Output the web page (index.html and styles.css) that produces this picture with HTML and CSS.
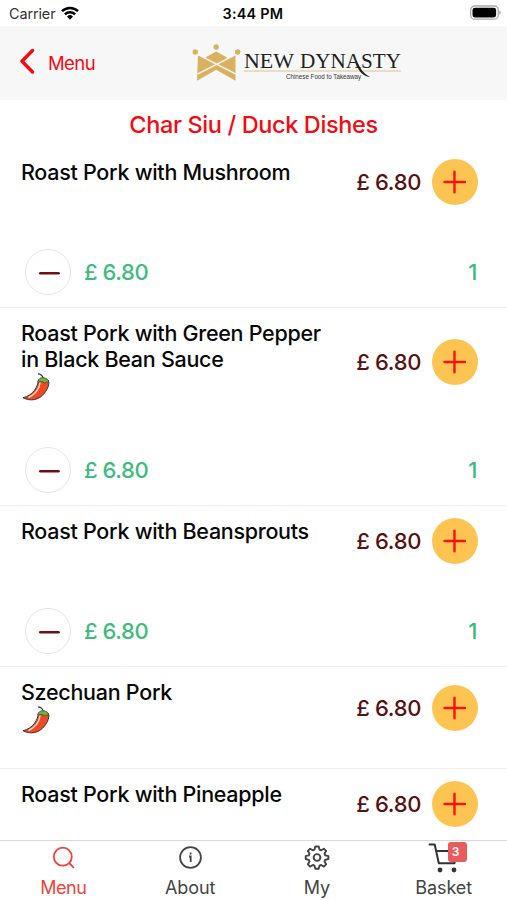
FILE: index.html
```html
<!DOCTYPE html>
<html lang="en">
<head>
<meta charset="utf-8">
<title>New Dynasty</title>
<link rel="stylesheet" href="styles.css">
</head>
<body>
<svg class="defs" width="0" height="0" aria-hidden="true">
  <symbol id="plus" viewBox="0 0 46 46"><path d="M22.500 12.800v20.400M12.500 23h20.400" fill="none" stroke="#f5130c" stroke-width="2.4" stroke-linecap="round"/></symbol>
  <symbol id="minus" viewBox="0 0 46 46"><path d="M15 24.3h19" fill="none" stroke="#701010" stroke-width="2.8" stroke-linecap="round"/></symbol>
  <symbol id="chili" viewBox="0 0 28 28">
    <path d="M16.500 .8C19.500 1.300 20.800 3 21.200 5.500" fill="none" stroke="#333b38" stroke-width="1.300" stroke-linecap="round"/>
    <path d="M16.500 7C16 13 11.500 22.500 1 24.700C8 28.500 17 27.500 22.500 20C26 15.500 27.500 11.500 26.500 7.500Z" fill="#ef4a25" stroke="#3b3432" stroke-width="1"/>
    <path d="M18 10C17 16 13 21.500 7 24.300" fill="none" stroke="#ffd9cb" stroke-width="1.500" stroke-linecap="round"/>
    <path d="M15.800 9.300C16.300 6 18.500 4.300 21.200 4.800C24.500 5 26.500 6.500 26.800 9.800C25 8.700 24 9 22.600 10C21 8.500 18 8 15.800 9.300Z" fill="#72b83e" stroke="#3c5130" stroke-width=".9"/>
  </symbol>
</svg>
<div class="screen">
  <div class="status">
    <span class="carrier">Carrier</span>
    <svg class="wifi" width="18" height="14" viewBox="0 0 18 14"><g fill="none" stroke="#000" stroke-width="2.500"><path d="M1 5.200a11.500 11.500 0 0 1 16 0M3.900 8.300a7.200 7.200 0 0 1 10.200 0"/></g><path d="M9 13.700l-3-3.200a4.400 4.400 0 0 1 6 0z"/></svg>
    <span class="time">3:44 PM</span>
    <svg class="battery" width="32" height="16" viewBox="0 0 32 16"><rect x="-.3" y="1" width="27.600" height="13.200" rx="4" fill="#fff" stroke="#aaa" stroke-width="1.300"/><rect x="1.500" y="2.800" width="23.600" height="9.600" rx="2.400"/><path d="M28.300 5.200q3 2.300 0 4.600z" fill="#aaa"/></svg>
  </div>
  <header class="header">
    <svg class="back" width="16" height="26" viewBox="0 0 16 26"><path d="M13.500 2.500L3 13.300L13.500 24" fill="none" stroke="#f40a12" stroke-width="3.400" stroke-linecap="round" stroke-linejoin="round"/></svg>
    <span class="back-label">Menu</span>
    <svg class="logo" width="224" height="42" viewBox="0 0 224 42">
      <path d="M7 14L16.500 18.800L14.500 16.500L25.200 10.500L36 16.500L34.500 18.800L44.500 14V39.800L25.200 28.800L6 39.800z" fill="#d9b15f"/>
      <path d="M6.500 13.300L45 33.200M45 13.300L6.500 33.200" stroke="#f7f7f7" stroke-width="1.500"/>
      <g fill="#d9b15f"><circle cx="4.300" cy="11" r="2.700"/><circle cx="25.200" cy="6" r="2.700"/><circle cx="46.700" cy="11" r="2.700"/></g>
      <path d="M53 30H210" stroke="#e3c18f" stroke-width="1.200"/>
      <text class="brand" x="53" y="26.500" textLength="50" lengthAdjust="spacingAndGlyphs">NEW</text>
      <text class="brand" x="109" y="26.500" textLength="101" lengthAdjust="spacingAndGlyphs">DYNASTY</text>
      <path d="M165.500 20C168.500 25 171 32 179 36C173.500 35.500 169 32 166.500 26z" fill="#222"/>
      <text class="tagline" x="95" y="37.800" textLength="75" lengthAdjust="spacingAndGlyphs">Chinese Food to Takeaway</text>
    </svg>
  </header>
  <main class="list">
    <h1 class="title">Char Siu / Duck Dishes</h1>
    <section class="item">
      <div class="top"><div class="name">Roast Pork with Mushroom</div><span class="price">£ 6.80</span><svg class="btn add"><use href="#plus"/></svg></div>
      <div class="qty"><svg class="btn remove"><use href="#minus"/></svg><span class="sum">£ 6.80</span><span class="count">1</span></div>
    </section>
    <section class="item tall">
      <div class="top"><div class="name">Roast Pork with Green Pepper<br>in Black Bean Sauce<svg class="chili"><use href="#chili"/></svg></div><span class="price">£ 6.80</span><svg class="btn add"><use href="#plus"/></svg></div>
      <div class="qty"><svg class="btn remove"><use href="#minus"/></svg><span class="sum">£ 6.80</span><span class="count">1</span></div>
    </section>
    <section class="item">
      <div class="top"><div class="name">Roast Pork with Beansprouts</div><span class="price">£ 6.80</span><svg class="btn add"><use href="#plus"/></svg></div>
      <div class="qty"><svg class="btn remove"><use href="#minus"/></svg><span class="sum">£ 6.80</span><span class="count">1</span></div>
    </section>
    <section class="item short">
      <div class="top"><div class="name">Szechuan Pork<svg class="chili"><use href="#chili"/></svg></div><span class="price">£ 6.80</span><svg class="btn add"><use href="#plus"/></svg></div>
    </section>
    <section class="item last">
      <div class="top"><div class="name">Roast Pork with Pineapple</div><span class="price">£ 6.80</span><svg class="btn add"><use href="#plus"/></svg></div>
    </section>
  </main>
  <nav class="tabs">
    <div class="tab active"><svg width="32" height="32" viewBox="0 0 32 32" fill="none" stroke="currentColor" stroke-width="1.800" stroke-linecap="round"><circle cx="15.800" cy="14.700" r="9"/><path d="M22.300 21.200L26.400 25.300"/></svg><span>Menu</span></div>
    <div class="tab"><svg width="32" height="32" viewBox="0 0 32 32" fill="none" stroke="currentColor" stroke-width="1.800"><circle cx="16.500" cy="15.500" r="10.400"/><path d="M15 14.500h1.700v5.500M16.600 10.500v2" stroke-width="1.800"/></svg><span>About</span></div>
    <div class="tab"><svg width="32" height="32" viewBox="0 0 32 32" fill="none" stroke="currentColor" stroke-width="1.900" stroke-linejoin="round"><g transform="translate(0 -.5)"><circle cx="16" cy="16" r="3.400"/><path d="M14.300 5h3.400l.8 3.100 1.700.7 2.700-1.600 2.200 2.200-1.600 2.700.7 1.700 3.200.8v2.900l-3.200.9-.7 1.700 1.600 2.700-2.200 2.300-2.700-1.600-1.700.7-.8 3.100h-3.400l-.8-3.100-1.700-.7-2.700 1.600-2.200-2.300 1.600-2.700-.7-1.700-3.100-.9v-2.900l3.100-.8.7-1.700-1.600-2.700 2.200-2.200 2.700 1.600 1.700-.7z"/></g></svg><span>My</span></div>
    <div class="tab"><div class="cart"><svg width="32" height="32" viewBox="0 0 32 32" fill="none" stroke="#333" stroke-width="2" stroke-linejoin="round" stroke-linecap="round"><path d="M1.500 2.500H6.700L10.800 21.200H26.500L28.500 9H8.500"/><g fill="#333" stroke="none"><circle cx="12" cy="28" r="2.400"/><circle cx="26" cy="28" r="2.400"/></g></svg><b class="badge">3</b></div><span>Basket</span></div>
  </nav>
</div>
</body>
</html>
```
FILE: styles.css
```css
* { box-sizing: border-box; }
body { margin: 0; background: #fff; font-family: Inter, "Liberation Sans", sans-serif; color: #080808; }
.defs { position: absolute; }
svg { display: block; flex: none; }
.screen { width: 507px; height: 900px; display: flex; flex-direction: column; overflow: hidden; }
.status { flex: none; height: 26px; display: grid; grid-template-columns: auto 18px 1fr auto; align-items: center; padding: 1px 4px 0 9px; font-size: 14.4px; column-gap: 6px; }
.carrier { color: #333; letter-spacing: -.1px; }
.wifi { margin-top: -2px; }
.battery { margin-top: -1px; overflow: visible; }
.time { font-weight: 600; letter-spacing: .25px; padding-left: 137px; }
.header { flex: none; height: 74px; background: #f7f7f7; display: flex; align-items: center; padding-left: 19px; }
.back { margin-top: -4px; }
.back-label { color: #f40a12; font-size: 18.500px; letter-spacing: -.6px; margin-left: 13px; width: 143px; }
.logo { margin-top: -2px; }
.brand { font-family: "Liberation Serif", serif; font-size: 22px; fill: #222; }
.tagline { font-family: "Liberation Sans", sans-serif; font-size: 6.500px; fill: #333; }
.list { flex: 1; min-height: 0; overflow: hidden; }
.title { margin: 0; height: 47px; line-height: 50px; text-align: center; color: #f40a12; font-size: 23.500px; font-weight: 500; letter-spacing: -.38px; }
.item { height: 161px; border-bottom: 1px solid #efefef; padding: 12px 29px 0 21px; display: flex; flex-direction: column; }
.tall { height: 197.500px; }
.short { height: 102px; }
.last { border: 0; }
.top { display: flex; align-items: center; min-height: 46px; }
.name { flex: 1; align-self: flex-start; font-size: 21.500px; line-height: 25.500px; font-weight: 500; white-space: nowrap; letter-spacing: -.28px; padding-top: 1px; margin-bottom: -1px; }
.chili { width: 28px; height: 28px; margin: 1px 0 4px 1px; }
.price { color: #571111; font-size: 22px; font-weight: 500; letter-spacing: -.35px; margin-right: 11px; }
.btn { width: 46px; height: 46px; border-radius: 50%; }
.add { background: #fec451; }
.qty { margin-top: auto; margin-bottom: 12px; display: flex; align-items: center; padding-left: 4px; color: #3dbb7d; font-size: 22px; font-weight: 500; letter-spacing: -.45px; }
.remove { border: 1.500px solid #e4e4e6; }
.sum { margin-left: 13px; flex: 1; }
.count { margin-right: 1px; }
.tabs { flex: none; height: 60px; border-top: 1px solid #d9d9d9; display: grid; grid-template-columns: repeat(4, 1fr); background: #fff; }
.tab { display: flex; flex-direction: column; align-items: center; color: #444; font-size: 18px; line-height: 24px; padding-top: 1px; letter-spacing: -.1px; }
.tab.active { color: #ef4239; letter-spacing: -.5px; }
.tab span { margin-top: 2px; }
.cart { position: relative; }
.badge { position: absolute; left: 20px; top: 0; width: 19px; height: 20px; border-radius: 3px; background: #e95c5e; color: #fff; font-size: 12px; line-height: 20px; font-weight: 600; text-align: center; text-indent: -3px; }
```
